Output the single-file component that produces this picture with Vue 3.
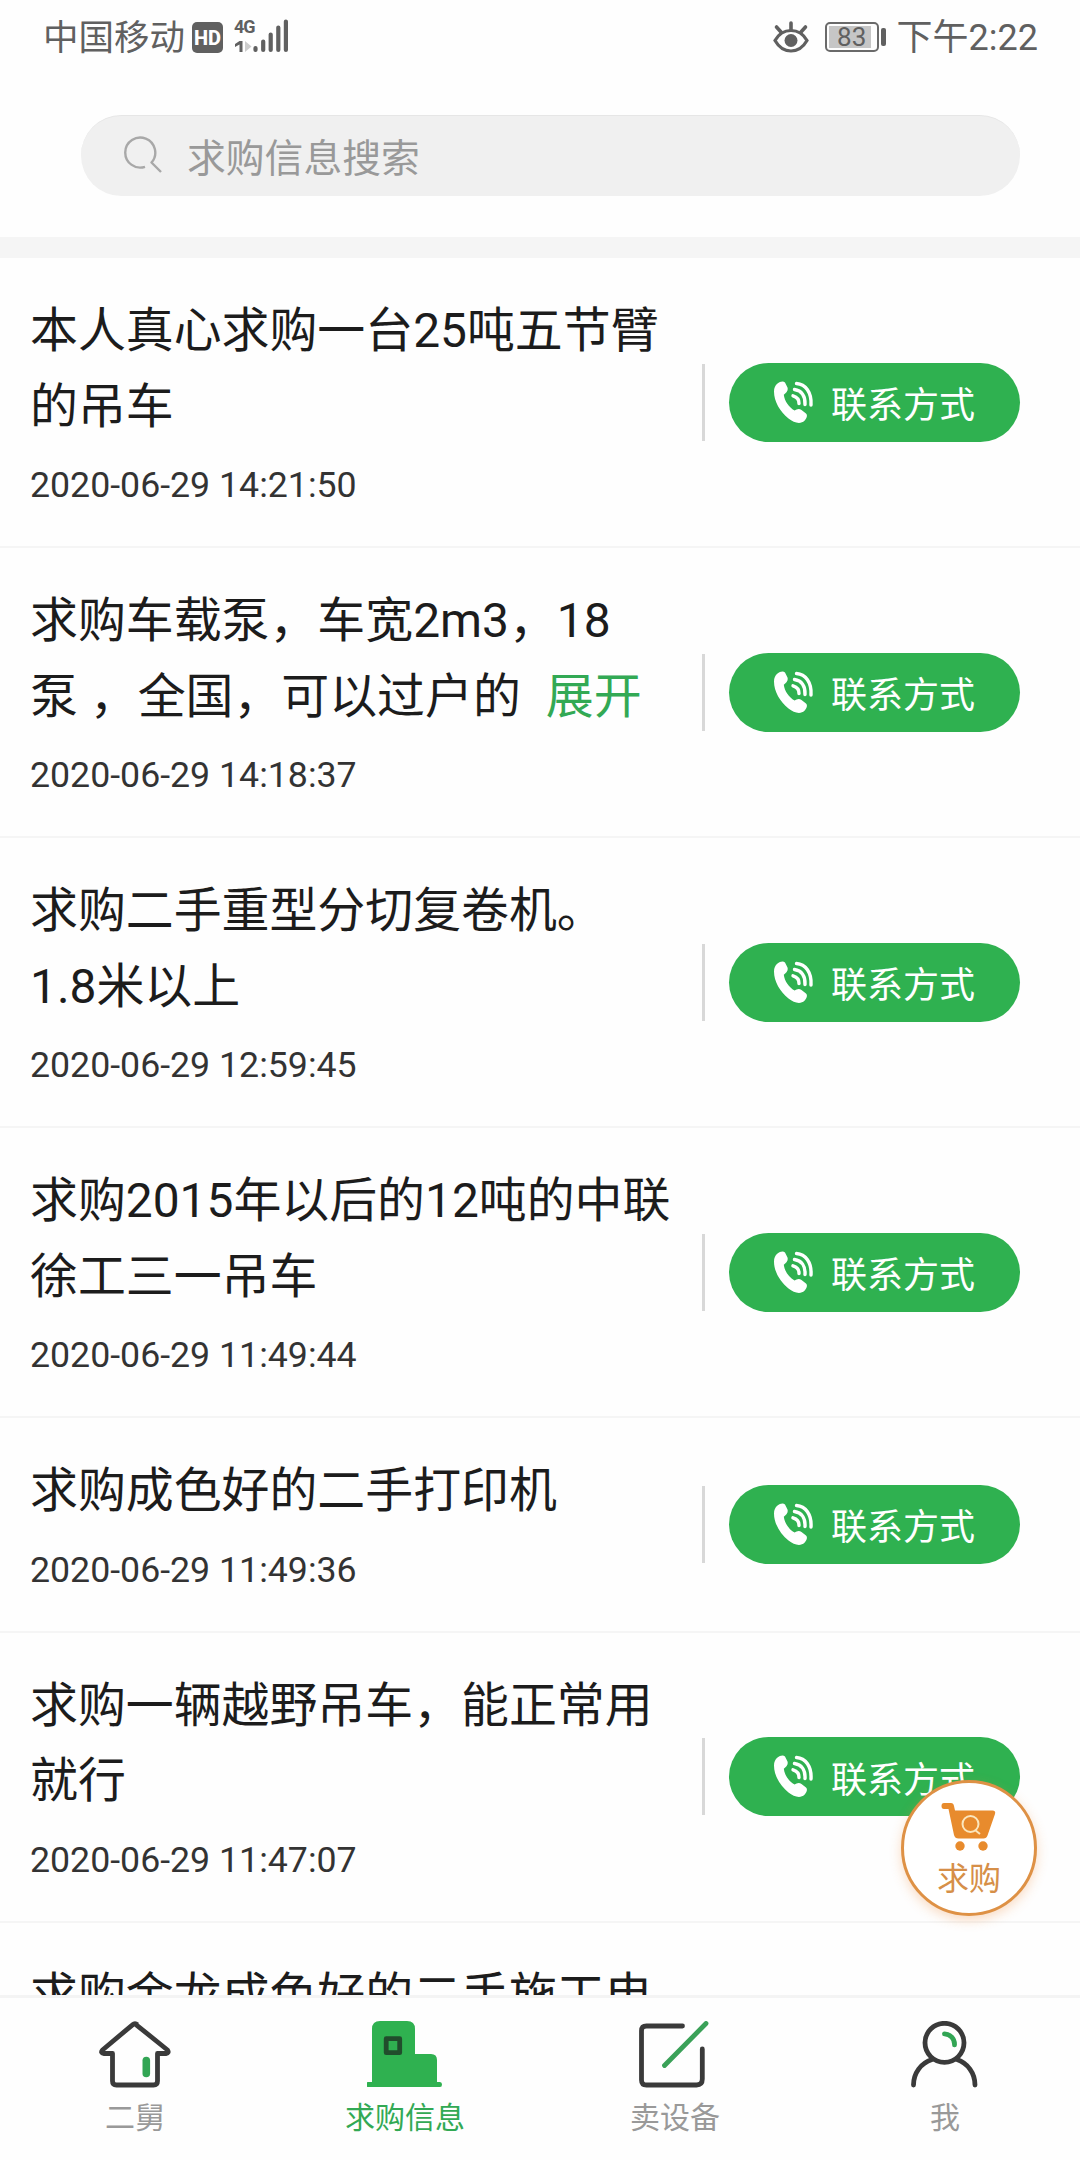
<script setup>
const items = [
  { lines: ['本人真心求购一台25吨五节臂', '的吊车'], time: '2020-06-29 14:21:50' },
  { lines: ['求购车载泵，车宽2m3，18', '泵 ，全国，可以过户的'], time: '2020-06-29 14:18:37', more: true },
  { lines: ['求购二手重型分切复卷机。', '1.8米以上'], time: '2020-06-29 12:59:45' },
  { lines: ['求购2015年以后的12吨的中联', '徐工三一吊车'], time: '2020-06-29 11:49:44' },
  { lines: ['求购成色好的二手打印机'], time: '2020-06-29 11:49:36' },
  { lines: ['求购一辆越野吊车，能正常用', '就行'], time: '2020-06-29 11:47:07' },
]
</script>

<template>
  <div class="screen">
    <header class="status">
      <div class="status-left">
        <span class="carrier">中国移动</span>
        <span class="hd">HD</span>
        <div class="signal">
          <span class="net">4G</span>
          <svg width="54" height="34" viewBox="0 0 54 34">
            <path d="M4.500 33V25.500L0 28V25L4.500 22H7.500V33Z" fill="#606060" />
            <path d="M10 22l6.500 5.500-6.500 5.500z" fill="#ccc" />
            <g stroke="#606060" stroke-width="4.200" stroke-linecap="round">
              <path d="M20.500 29v2M28.200 22.500v8.500M35.700 15.500v15.500M43.300 8.500v22.500M50.900 2.500v28.500" />
            </g>
          </svg>
        </div>
      </div>
      <div class="status-right">
        <svg class="eye" width="36" height="32" viewBox="0 0 36 32" fill="none" stroke="#606060">
          <path d="M2 19.500C6 12.500 11.500 9.500 18 9.500s12 3 16 10C30 26.500 24.500 30 18 30S6 26.500 2 19.500Z" stroke-width="3.200" />
          <path d="M18 9V2M8 11L3.500 6M28 11l4.500-5" stroke-width="3.600" stroke-linecap="round" />
          <circle cx="18" cy="19.500" r="6.500" fill="#606060" stroke="none" />
        </svg>
        <span class="battery"><span class="level">83</span></span>
        <span class="cap"></span>
        <span class="clock">下午2:22</span>
      </div>
    </header>

    <div class="search-wrap">
      <div class="search">
        <svg width="40" height="40" viewBox="0 0 40 40" fill="none" stroke="#a8a8a8" stroke-width="2.400">
          <path d="M21 31.800A15 15 0 1 1 27.500 27.500L37 37" stroke-linejoin="round" />
        </svg>
        <span>求购信息搜索</span>
      </div>
    </div>

    <main class="list">
      <section v-for="item in items" :key="item.time" class="item">
        <div class="info">
          <div v-for="(line, i) in item.lines" :key="i" class="title">
            {{ line }}<span v-if="item.more && i === item.lines.length - 1" class="more">展开</span>
          </div>
          <div class="time">{{ item.time }}</div>
        </div>
        <div class="action">
          <button class="contact">
            <svg width="40" height="43" viewBox="0 0 40 43">
              <path d="M3.500 2.500C6 .2 9.500-.3 11 1.500L13.500 6.500C14.500 10 12 12 9.800 13.800C10.500 20 15 26.500 20.500 29.500C23 27.800 25.500 27.500 27.500 29L32 32.500C34 34.500 32.500 37.500 30.500 39.800C26.500 43.500 20 42 14.500 37.500C6 30.500 0 20.500 0 10.500C0 7 1.200 4.500 3.500 2.500Z" fill="#fff" />
              <g fill="none" stroke="#fff" stroke-width="3.400" stroke-linecap="round">
                <path d="M22.500 2.500C31.500 3.100 37.800 11.500 37 24" />
                <path d="M20.500 8.500C27.500 9.500 31.500 15 31 23.500" />
                <path d="M19 14.800C23 16 25.200 19 25 22.500" />
              </g>
            </svg>
            <span>联系方式</span>
          </button>
        </div>
      </section>
      <section class="item last">
        <div class="info">
          <div class="title">求购金龙成色好的二手施工电</div>
        </div>
      </section>
    </main>

    <nav class="tabs">
      <a class="tab">
        <svg width="76" height="68" viewBox="0 0 76 68" fill="none">
          <path d="M38 2.800L70.500 29Q72.500 32 69 32.500H60.500V60Q60.500 64 56.500 64H19.500Q15.500 64 15.500 60V32.500H7Q3 32 5.500 29L35.500 3.800Q38 1.500 40.500 3.800" stroke="#3a3a3a" stroke-width="4.800" stroke-linejoin="round" />
          <path d="M49.300 39.500v13" stroke="#32a554" stroke-width="7.600" stroke-linecap="round" />
        </svg>
        <span>二舅</span>
      </a>
      <a class="tab active">
        <svg width="76" height="68" viewBox="1 0 76 68">
          <path d="M6 61V8Q6 0 14 0H41Q49 0 49 8V33H65Q71 33 71 39V61H74Q76 61 76 63.500T74 66H2Q0 66 0 63.500T2 61Z" fill="#2fb150" />
          <rect x="20.200" y="17.700" width="13.500" height="14" fill="none" stroke="#214d2c" stroke-width="4.800" stroke-linejoin="round" />
        </svg>
        <span>求购信息</span>
      </a>
      <a class="tab">
        <svg width="76" height="68" viewBox="1 0 76 68" fill="none" stroke-width="4.800" stroke-linecap="round">
          <path d="M46.500 5H10.500Q5.500 5 5.500 10V59Q5.500 64 10.500 64H60.500Q66.300 64 66.300 58V28" stroke="#3a3a3a" />
          <path d="M28.500 44.500L70 2.500" stroke="#3aa158" />
        </svg>
        <span>卖设备</span>
      </a>
      <a class="tab">
        <svg width="76" height="68" viewBox="0 0 76 68" fill="none" stroke-width="4.800" stroke-linecap="round">
          <circle cx="37.500" cy="21.800" r="19.500" stroke="#3a3a3a" />
          <path d="M6.500 64C6.500 52 14 42 25 38.500M68 64C68 52 60.500 42 50 38.500" stroke="#3a3a3a" />
          <path d="M37.500 12.800A10.500 10.500 0 0 1 47.500 23.800" stroke="#32a554" />
        </svg>
        <span>我</span>
      </a>
    </nav>

    <div class="fab">
      <svg width="56" height="50" viewBox="0 0 56 50">
        <path d="M3 1H10Q12.500 1 13 4L14 8.500H51.500Q55 8.500 54 12L46.500 33.500Q45.500 36.500 42.500 36.500H17.500Q14 36.500 13 33L7.500 7H3Q.5 7 .5 4T3 1Z" fill="#e88b2d" />
        <circle cx="19" cy="44" r="4.700" fill="#e88b2d" />
        <circle cx="42" cy="44" r="4.700" fill="#e88b2d" />
        <g fill="none" stroke="#fbe6bd" stroke-width="2">
          <circle cx="29.500" cy="22" r="8" />
          <path d="M34 28l5 4" />
        </g>
      </svg>
      <span>求购</span>
    </div>
  </div>
</template>

<style>
body {
  background: #fefefe;
}
</style>

<style scoped>
.screen {
  position: relative;
  width: 1080px;
  height: 2160px;
  display: flex;
  flex-direction: column;
  overflow: hidden;
  background: #fefefe;
  font-family: Roboto, 'Noto Sans CJK SC', sans-serif;
  color: #1c1c1c;
}
.status {
  height: 74px;
  display: flex;
  justify-content: space-between;
  padding: 0 42px 0 43px;
  color: #606060;
  font-size: 36px;
  line-height: 74px;
  flex: none;
}
.status-left,
.status-right {
  display: flex;
  align-items: center;
}
.carrier {
  font-size: 35.5px;
  width: 149px;
  padding-top: 2px;
}
.clock {
  padding-top: 2px;
}
.hd {
  width: 31px;
  height: 31px;
  border-radius: 5px;
  background: #606060;
  color: #fff;
  font-size: 20px;
  font-weight: 800;
  line-height: 32px;
  text-align: center;
}
.signal {
  position: relative;
  width: 54px;
  height: 34px;
  margin-left: 12px;
  margin-top: -3px;
}
.signal svg {
  display: block;
}
.net {
  position: absolute;
  left: -1px;
  top: -3px;
  font-size: 18px;
  line-height: 22px;
  font-weight: 700;
  letter-spacing: -1px;
}
.battery {
  box-sizing: border-box;
  width: 54px;
  height: 30px;
  border: 2px solid #6a6a6a;
  border-radius: 5px;
  padding: 2px;
  margin-left: 16px;
}
.level {
  display: block;
  width: 42px;
  height: 22px;
  background: #c6c6c6;
  box-sizing: border-box;
  padding-left: 8px;
  font-size: 26px;
  line-height: 23px;
}
.cap {
  width: 4.5px;
  height: 18px;
  border-radius: 2px;
  background: #606060;
  margin: 0 11px 0 2px;
}
.search-wrap {
  flex: none;
  box-sizing: border-box;
  height: 184px;
  padding: 41px 60px 0 81px;
  border-bottom: 21px solid #f5f5f5;
}
.search {
  height: 81px;
  box-sizing: border-box;
  border-radius: 41px;
  background: #f0f0f0;
  border-top: 1px solid #e6e6e6;
  display: flex;
  align-items: center;
  padding-left: 43px;
  color: #999;
  font-size: 38.8px;
}
.search svg {
  margin-right: 23px;
  margin-top: -3px;
}
.search span {
  line-height: 60px;
  margin-top: 6px;
}
.list {
  flex: 1;
  min-height: 0;
  overflow: hidden;
}
.item {
  box-sizing: border-box;
  display: flex;
  align-items: center;
  justify-content: space-between;
  padding: 36px 60px 23px 30px;
  border-bottom: 2px solid #f5f5f5;
}
.title {
  font-size: 47.9px;
  line-height: 75.5px;
  height: 75.5px;
  white-space: pre;
}
.more {
  color: #32a954;
  margin-left: 25px;
}
.time {
  margin-top: 3px;
  font-size: 35.7px;
  line-height: 75px;
  height: 75px;
  color: #333;
}
.action {
  display: flex;
  align-items: center;
  padding-left: 27px;
  background: linear-gradient(#d8d8d8, #d8d8d8) left center / 3px 77px no-repeat;
  margin-top: -13px;
}
.contact {
  width: 291px;
  height: 79px;
  border: 0;
  border-radius: 40px;
  background: #2fb150;
  color: #fff;
  font: inherit;
  font-size: 36px;
  display: flex;
  align-items: center;
  padding: 0 0 0 45px;
}
.contact svg {
  margin-right: 17px;
}
.tabs {
  flex: none;
  height: 165px;
  box-sizing: border-box;
  border-top: 3px solid #f4f4f4;
  display: flex;
  background: #fefefe;
}
.tab {
  flex: 1;
  display: flex;
  flex-direction: column;
  align-items: center;
  padding-top: 23px;
  color: #999;
  font-size: 30px;
}
.tab span {
  line-height: 40px;
  margin-top: 9px;
}
.tab.active {
  color: #32a954;
}
.fab {
  position: absolute;
  left: 901px;
  top: 1780px;
  width: 136px;
  height: 136px;
  box-sizing: border-box;
  border: 3px solid #de9145;
  border-radius: 50%;
  background: #fff;
  box-shadow: 0 4px 12px rgba(240, 140, 60, 0.3);
  display: flex;
  flex-direction: column;
  align-items: center;
  padding-top: 19px;
  color: #d68f48;
  font-size: 32px;
}
.fab span {
  line-height: 44px;
  margin-top: 5px;
}
</style>
